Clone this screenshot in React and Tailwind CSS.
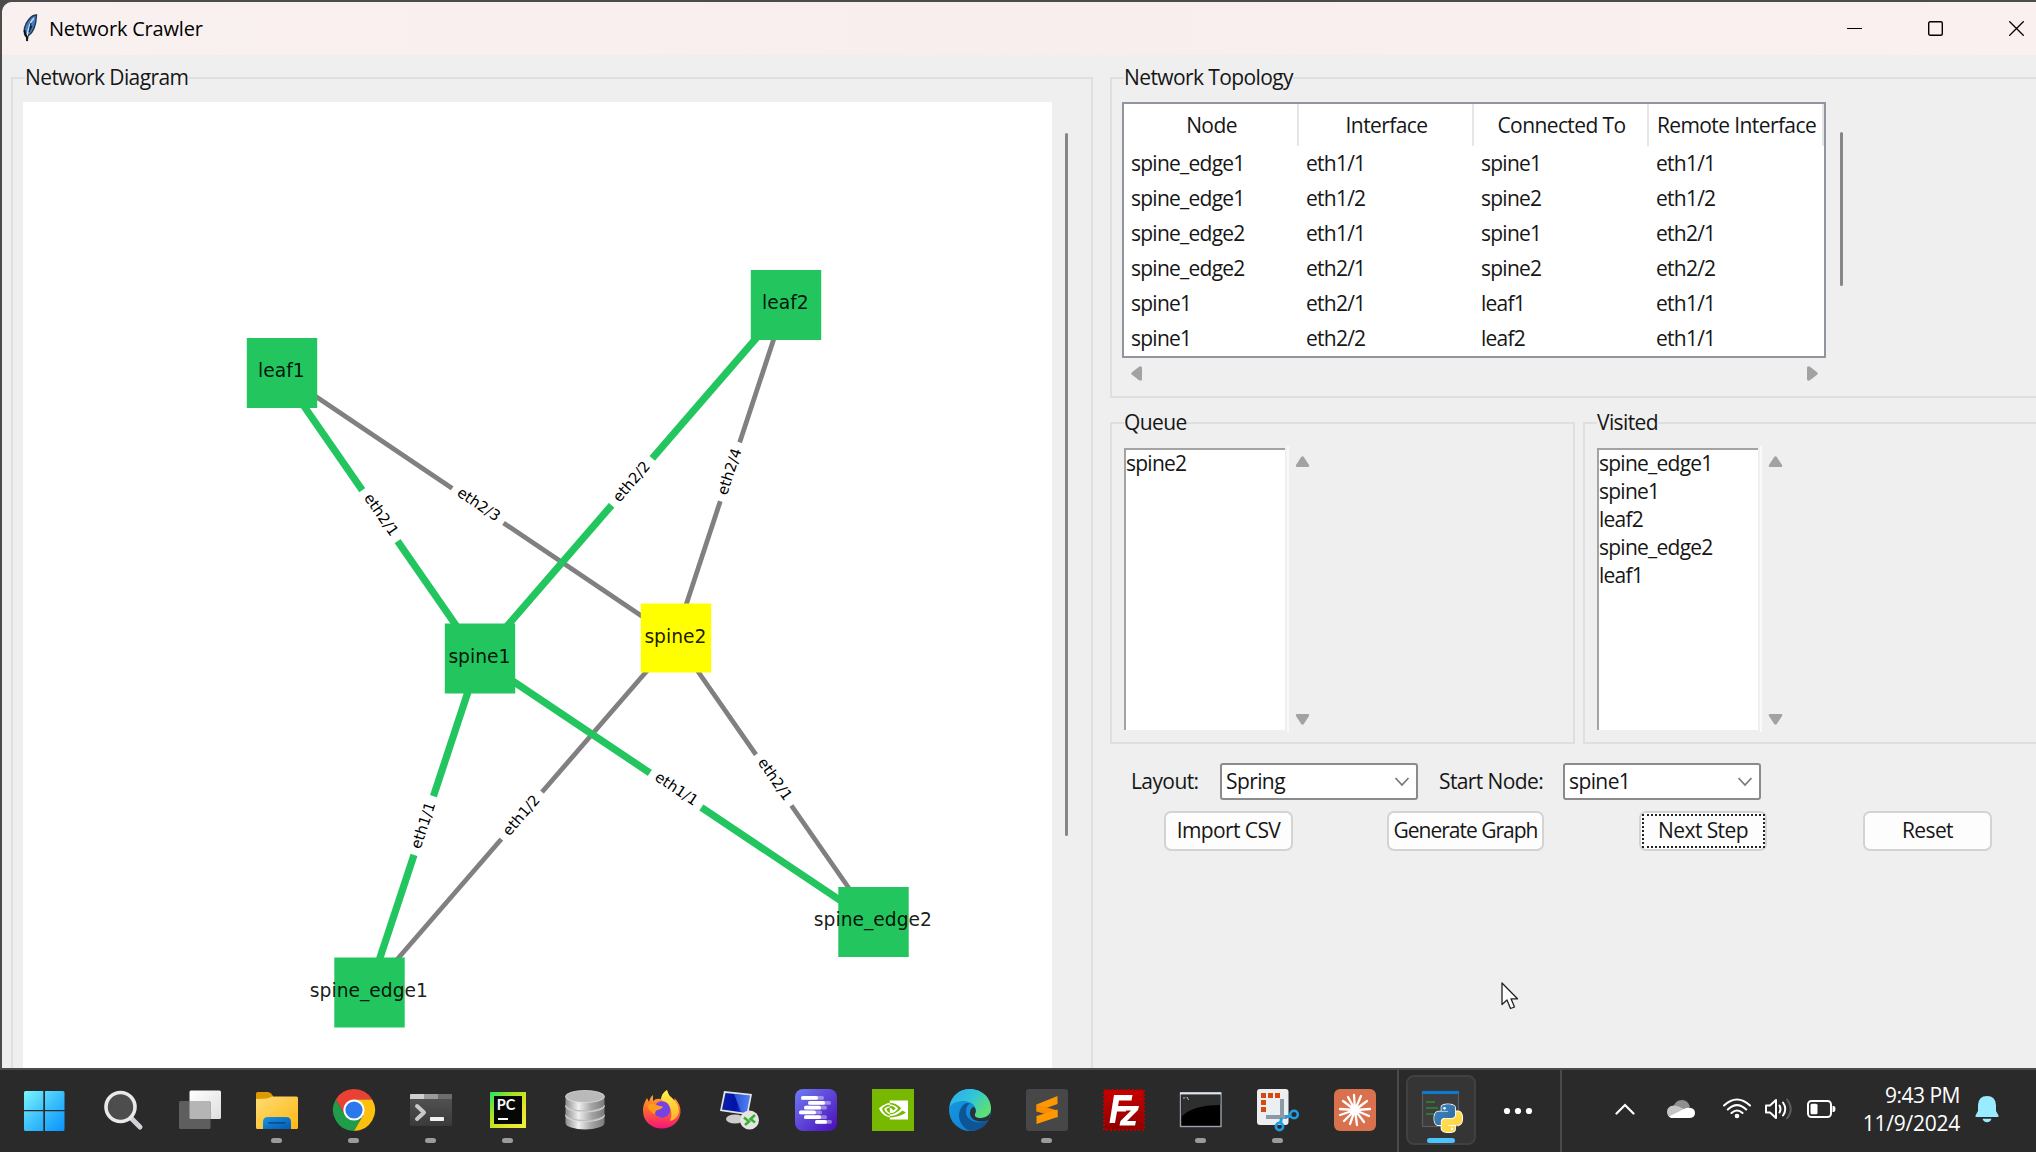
import React from "react";
import { SiNvidia } from "react-icons/si";

const GREEN = "#22c55e";

const NODES = {
  leaf1: { x: 282, y: 373 },
  leaf2: { x: 786, y: 305 },
  spine1: { x: 480, y: 658.5 },
  spine2: { x: 676, y: 638.5, fill: "#ffff00" },
  spine_edge1: { x: 369.5, y: 992.5 },
  spine_edge2: { x: 873.5, y: 922 },
};

const EDGES = [
  ["leaf1", "spine2", "eth2/3", false],
  ["leaf2", "spine2", "eth2/4", false],
  ["spine_edge1", "spine2", "eth1/2", false],
  ["spine2", "spine_edge2", "eth2/1", false],
  ["leaf1", "spine1", "eth2/1", true],
  ["spine1", "leaf2", "eth2/2", true],
  ["spine_edge1", "spine1", "eth1/1", true],
  ["spine1", "spine_edge2", "eth1/1", true],
];

const ROWS = [
  ["spine_edge1", "eth1/1", "spine1", "eth1/1"],
  ["spine_edge1", "eth1/2", "spine2", "eth1/2"],
  ["spine_edge2", "eth1/1", "spine1", "eth2/1"],
  ["spine_edge2", "eth2/1", "spine2", "eth2/2"],
  ["spine1", "eth2/1", "leaf1", "eth1/1"],
  ["spine1", "eth2/2", "leaf2", "eth1/1"],
];

function Diagram() {
  return (
    <svg width="1029" height="966" viewBox="23 102 1029 966" className="block bg-white tracking-normal">
      <g transform="translate(-1 0)">
        {EDGES.map(([a, b, , walked]) => (
          <line
            key={a + b}
            x1={NODES[a].x}
            y1={NODES[a].y}
            x2={NODES[b].x}
            y2={NODES[b].y}
            stroke={walked ? GREEN : "#808080"}
            strokeWidth={walked ? 7.2 : 4.8}
          />
        ))}
      </g>
      {Object.entries(NODES).map(([name, n]) => (
        <rect key={name} x={n.x - 35.2} y={n.y - 35} width="70.4" height={n.fill ? 69 : 70} fill={n.fill || GREEN} />
      ))}
      {EDGES.map(([a, b, label]) => {
        const p = NODES[a];
        const q = NODES[b];
        const angle = (Math.atan2(q.y - p.y, q.x - p.x) * 180) / Math.PI;
        const upright = angle > 90 ? angle - 180 : angle < -90 ? angle + 180 : angle;
        return (
          <g key={a + b} transform={`translate(${(p.x + q.x) / 2 - 1.2} ${(p.y + q.y) / 2}) rotate(${upright})`}>
            <rect x="-31" y="-13" width="62" height="26" fill="#fff" />
            <text
              x="0"
              y={upright > 0 ? 3.2 : 4.6}
              textAnchor="middle"
              fontSize="14.8"
              fontFamily="DejaVu Sans, sans-serif"
              fill="#000"
            >
              {label}
            </text>
          </g>
        );
      })}
      {Object.entries(NODES).map(([name, n]) => (
        <text
          key={name}
          x={n.x - 0.6}
          y={n.y + 4.4}
          textAnchor="middle"
          fontSize="18.7"
          fontFamily="DejaVu Sans, sans-serif"
          fill="#000"
          fillOpacity="0.9"
        >
          {name}
        </text>
      ))}
    </svg>
  );
}

function Group({ title, className, children }) {
  return (
    <fieldset className={`min-w-0 border-2 border-[#dfdfdf] ${className}`}>
      <legend className="h-[30px] whitespace-nowrap leading-[28px]">{title}</legend>
      {children}
    </fieldset>
  );
}

function Arrow({ dir }) {
  const d = {
    up: "M7.5 1.2Q8.2 1.2 8.8 2L14 10Q14.8 12 13.2 12H1.8Q.2 12 1 10L6.2 2Q6.8 1.2 7.5 1.2Z",
    down: "M7.5 11.8Q8.2 11.8 8.8 11L14 3Q14.8 1 13.2 1H1.8Q.2 1 1 3L6.2 11Q6.8 11.8 7.5 11.8Z",
    left: "M1.2 7.5Q1.2 6.8 2 6.2L9 .8Q12 -.6 12 2V13Q12 15.6 9 14.2L2 8.8Q1.2 8.2 1.2 7.5Z",
    right: "M11.8 7.5Q11.8 6.8 11 6.2L4 .8Q1 -.6 1 2V13Q1 15.6 4 14.2L11 8.8Q11.8 8.2 11.8 7.5Z",
  }[dir];
  const flat = dir === "up" || dir === "down";
  return (
    <svg width={flat ? 15 : 13} height={flat ? 13 : 15} className="block">
      <path d={d} fill="#a2a2a2" />
    </svg>
  );
}

function ListBox({ items }) {
  return (
    <div className="flex h-[286px]">
      <div className="mt-[2px] h-[282px] w-[161px] border-l-2 border-t-2 border-[#a3a3a3] bg-white tracking-[-0.75px]">
        {items.map((t) => (
          <div key={t} className="h-7 leading-[26px]">
            {t}
          </div>
        ))}
      </div>
      <div className="ml-[2px] h-full w-[2px] bg-[#fafafa]" />
      <div className="ml-[6px] flex flex-col justify-between pb-[6px] pt-[9px]">
        <Arrow dir="up" />
        <Arrow dir="down" />
      </div>
    </div>
  );
}

function Combo({ value }) {
  return (
    <div className="flex h-[37px] w-[198px] items-center justify-between rounded-[3px] border-2 border-[#8b8b8b] bg-white pl-[4px] pr-[6px]">
      <span>{value}</span>
      <svg width="16" height="12" className="block">
        <path d="M1.5 2L8 9L14.5 2" fill="none" stroke="#777" strokeWidth="1.7" />
      </svg>
    </div>
  );
}

function Button({ className, focused, children }) {
  return (
    <button
      className={`flex h-[40px] items-center justify-center whitespace-nowrap rounded-[7px] border-2 border-[#d3d3d3] bg-[#fdfdfd] ${className}`}
    >
      {focused ? (
        <span className="flex h-[34px] w-[123px] items-center justify-center border-2 border-dotted border-[#222]">
          {children}
        </span>
      ) : (
        children
      )}
    </button>
  );
}

function TitleBar() {
  return (
    <div className="flex h-[53px] shrink-0 items-center rounded-tl-[10px] bg-gradient-to-r from-[#f9f0f0] via-[#f8eeed] to-[#f9f0ef] pl-[20px] text-black">
      <svg width="16" height="28" viewBox="0 0 16 28" className="-mt-[2px]">
        <path d="M14.5 1C9 1 4 8 2.5 14C1.8 18 2.5 21 4.5 23L5 27L6 22C11 19 14 12 14.5 1Z" fill="#3f7fcb" stroke="#2b3440" strokeWidth="1.4" />
        <path d="M12 4C8 8 6 14 5 23" fill="none" stroke="#cfe3f7" strokeWidth="1.3" />
        <path d="M9 9L8 14L10 12L7 18" fill="none" stroke="#16243a" strokeWidth="1.2" />
        <path d="M2.5 16Q3 21 5 23L5.2 27" fill="none" stroke="#111" strokeWidth="1.8" />
      </svg>
      <span className="ml-[11px] text-[20px] tracking-[-0.2px]">Network Crawler</span>
      <div className="ml-auto flex items-center gap-[66px] pr-[12px]">
        <svg width="15" height="15" className="block">
          <path d="M0 7.5H15" stroke="#000" strokeWidth="1.2" />
        </svg>
        <svg width="15" height="15" className="block">
          <rect x=".7" y=".7" width="13.6" height="13.6" rx="1.5" fill="none" stroke="#000" strokeWidth="1.4" />
        </svg>
        <svg width="15" height="15" className="block">
          <path d="M.3 .3L14.7 14.7M14.7 .3L.3 14.7" stroke="#000" strokeWidth="1.3" />
        </svg>
      </div>
    </div>
  );
}

const ICONS = [
  {
    name: "start",
    art: (
      <g fill="url(#win)">
        <path d="M.5 2H18.3V21H-1V3.5Q-1 2 .5 2ZM20 2H38Q39.5 2 39.5 3.5V21H20ZM-1 22.2H18.3V42H.5Q-1 42 -1 40.5ZM20 22.2H39.5V40.5Q39.5 42 38 42H20Z" />
      </g>
    ),
  },
  {
    name: "search",
    art: (
      <g>
        <path d="M29 29L38 38" stroke="#cfd2d6" strokeWidth="5" strokeLinecap="round" />
        <circle cx="18.5" cy="18" r="14.5" fill="#4d4d4d" stroke="#e9e9ea" strokeWidth="3.6" />
      </g>
    ),
  },
  {
    name: "tasks",
    art: (
      <g>
        <rect x="10.5" y="1.5" width="31.5" height="28.5" rx="1.5" fill="url(#paper)" />
        <rect x="0" y="12" width="31.5" height="28" rx="1.5" fill="#5e5e5e" />
        <path d="M10.5 12H30Q31.5 12 31.5 13.5V30H12Q10.5 30 10.5 28.5Z" fill="#b5b5b5" />
      </g>
    ),
  },
  {
    name: "files",
    run: true,
    art: (
      <g>
        <path d="M0 4.5Q0 3 1.5 3H12Q13.5 3 15 4.5L17 7V12H0Z" fill="#dc9a00" />
        <path d="M0 10Q13 10 16 7.5H40.5Q42 7.5 42 9V38.5Q42 40 40.5 40H1.5Q0 40 0 38.5Z" fill="url(#folder)" />
        <path d="M7 40V33Q7 28 12 28H30Q35 28 35 33V40Z" fill="url(#fblue)" />
        <rect x="12.5" y="33" width="17" height="1.8" fill="#0a4f96" />
      </g>
    ),
  },
  {
    name: "chrome",
    run: true,
    art: (
      <g>
        <path d="M2.8 10.5A21 21 0 0 1 39.2 10.5H21L12 26.2Z" fill="#e94235" />
        <path d="M2.8 10.5A21 21 0 0 0 21 42L30.2 26.2L11.9 26.2Z" fill="#1f9d49" />
        <path d="M21 42A21 21 0 0 0 39.2 10.5H21L30.2 26.2Z" fill="#fdc00f" />
        <circle cx="21" cy="21" r="10.6" fill="#fff" />
        <circle cx="21" cy="21" r="8.6" fill="#2b78ea" />
      </g>
    ),
  },
  {
    name: "terminal",
    run: true,
    art: (
      <g>
        <rect y="5" width="42" height="32" rx="1" fill="url(#term)" />
        <path d="M0 10V6Q0 5 1 5H14V10Z" fill="#cfcfcf" />
        <path d="M14 5H28V10H14Z" fill="#9b9b9b" />
        <path d="M28 5H41Q42 5 42 6V10H28Z" fill="#6e6e6e" />
        <path d="M7 17L14 23.5L7 30" fill="none" stroke="#c9c9c9" strokeWidth="4" strokeLinecap="round" strokeLinejoin="round" />
        <rect x="20" y="28" width="14" height="4" rx=".8" fill="#f1f1f1" />
      </g>
    ),
  },
  {
    name: "pycharm",
    run: true,
    art: (
      <g>
        <rect x="3" y="3" width="36" height="36" fill="url(#pyc)" />
        <rect x="7" y="7" width="28" height="28" fill="#050805" />
        <text x="9.8" y="21" fontSize="14.5" fontWeight="700" fontFamily="Lato, sans-serif" fill="#fff">
          PC
        </text>
        <rect x="11" y="29" width="10" height="2" fill="#fff" />
      </g>
    ),
  },
  {
    name: "database",
    art: (
      <g>
        {[26, 16.5, 7].map((y) => (
          <g key={y}>
            <path d={`M1.5 ${y + 0.5}V${y + 8}A19.5 6.5 0 0 0 40.5 ${y + 8}V${y + 0.5}Z`} fill="url(#metal)" />
            <ellipse cx="21" cy={y + 0.5} rx="19.5" ry="6" fill="#b9b9b9" stroke="#dedede" strokeWidth=".8" />
          </g>
        ))}
      </g>
    ),
  },
  {
    name: "firefox",
    art: (
      <g>
        <path d="M2 22C2 15 5 11 6 9L8 13Q9 8 12 6L12 12Q15 9 20 10Q21 4 26 1Q27 6 31 9L33 12Q34 11 33.5 9Q40 15 39.5 24C38 34 30 39.5 21 39.5C10 39.5 2 32 2 22Z" fill="url(#fox)" />
        <path d="M20 10Q21 4 26 1Q27 6 31 9Q38 15 38 23Q36 31 29 32Q33 22 26 15Q22 13 20 10Z" fill="url(#foxy)" />
        <circle cx="21" cy="20.5" r="8.3" fill="#7542e5" />
        <path d="M6 16Q12 14 14 15Q17 17 22 17.5Q21 20 16 21Q14 22 14 25Q9 24 6 16Z" fill="#ff9a1f" />
      </g>
    ),
  },
  {
    name: "remote",
    art: (
      <g>
        <ellipse cx="17" cy="30" rx="9" ry="4.5" fill="#cdcdcd" />
        <path d="M6 2L34 5L30 26L2 22Z" fill="#e3e4e6" />
        <path d="M7.5 4L32 6.5L28.5 24L4 20.5Z" fill="url(#scr)" />
        <path d="M16 5L23 22.5L28.5 24L32 6.5Z" fill="#4b7cf0" opacity=".65" />
        <circle cx="31.5" cy="31" r="9.5" fill="#e4e4e4" />
        <path d="M26 28.5L31 32.5L27 36M37 26L32.5 30L37 33.5" fill="none" stroke="#35b22c" strokeWidth="2.5" />
      </g>
    ),
  },
  {
    name: "timeline",
    art: (
      <g>
        <rect width="42" height="42" rx="8" fill="url(#purple)" />
        {[
          [6, 7, 17, 6],
          [13, 12, 17, 6],
          [9, 16.8, 17, 6],
          [4, 21.5, 17, 6],
          [9, 26.3, 17, 6],
          [20, 31, 12, 5],
        ].map(([x, y, w, e]) => (
          <g key={y}>
            <rect x={x} y={y} width={w + e} height="3.8" rx="1.9" fill="#fff" opacity=".4" />
            <rect x={x} y={y} width={w} height="3.8" rx="1.9" fill="#fff" />
          </g>
        ))}
      </g>
    ),
  },
  {
    name: "nvidia",
    art: (
      <g>
        <rect width="42" height="42" fill="#76b900" />
        <SiNvidia x="7" y="6.5" width="29" height="29" size={29} color="#fff" />
      </g>
    ),
  },
  {
    name: "edge",
    art: (
      <g>
        <circle cx="21" cy="21" r="21" fill="url(#edgeBlue)" />
        <path d="M.5 18C2 7 10 0 21 0C33 0 42 9 42 19C42 26 37 29 31 29C27 29 25 27 26 25C29 20 25 13 16 12C8 12 3 14 .5 18Z" fill="url(#edgeTop)" />
        <path d="M16 14.5C8 20 7 35 20 41.5C29 43 37 37 39.5 31C32 36 17 33 17 23C17 19 18 16 21 14.5Q18 13.5 16 14.5Z" fill="#0f5596" />
        <path d="M26 25C25 28 28 29 31 29C36 29 39 27.5 41 24Q41 28 39.5 31C32 34.5 21 32 21 24Q21 19 25 18Q28 21 26 25Z" fill="#29313a" />
      </g>
    ),
  },
  {
    name: "sublime",
    run: true,
    art: (
      <g>
        <rect width="42" height="42" rx="3" fill="#474747" />
        <path d="M10.5 15.5L31.5 7V15L10.5 22.5Z" fill="#ff9800" />
        <path d="M10.5 15.5V22.5L31.5 28.5V21.5Z" fill="#f98d00" />
        <path d="M10.5 27L31.5 20.5V28L10.5 35Z" fill="#ff9800" />
      </g>
    ),
  },
  {
    name: "filezilla",
    art: (
      <g>
        <rect x="1" y="1" width="40" height="40" fill="url(#fz)" stroke="#b30000" strokeWidth="2" strokeDasharray="2 2" />
        <path d="M6.5 34L11 6H29.5L28.5 11.5H16L15 17H24L23 22.5H14L12 34Z" fill="#fff" />
        <path d="M21 17H36L35 21L24 32H33L32 36.5H16.5L17.5 32L28 21.5H20Z" fill="#fff" />
      </g>
    ),
  },
  {
    name: "console",
    run: true,
    art: (
      <g>
        <rect x=".5" y="4" width="40.5" height="33.5" fill="#000" stroke="#9aa3ad" strokeWidth="1.4" />
        <path d="M1.2 6H40.3V16Q12 16 1.2 28Z" fill="#2e2e2e" />
        <rect x="0" y="3.3" width="41" height="2.2" fill="#dfe6ee" />
        <path d="M3 9H5M6 8.5V9M7 8L8.5 11" stroke="#bbb" strokeWidth="1" />
      </g>
    ),
  },
  {
    name: "snip",
    run: true,
    art: (
      <g>
        <rect width="31.5" height="36" rx="3" fill="#eceff2" />
        <path d="M4 4H9V9H4ZM11 4H16V9H11ZM18 4H23V9H18ZM4 11H9V16H4ZM4 18H9V23H4Z" fill="#d9480f" />
        <path d="M25 10V28M9 28H30" stroke="#8d99a5" strokeWidth="4" />
        <circle cx="37" cy="25.5" r="3.8" fill="none" stroke="#1f9de0" strokeWidth="2.6" />
        <circle cx="22.5" cy="37.5" r="3.6" fill="none" stroke="#1f9de0" strokeWidth="2.6" />
        <path d="M28 28L34 27M24.5 29L23.500 34" stroke="#1f9de0" strokeWidth="3" />
      </g>
    ),
  },
  {
    name: "claude",
    art: (
      <g>
        <rect width="42" height="42" rx="6" fill="#d9714f" />
        <path
          d="M21 21L20 6M21 21L27 7M21 21L33 12M21 21L36 20M21 21L35 27M21 21L30 33M21 21L23 36M21 21L16 35M21 21L10 32M21 21L6 26M21 21L6 20M21 21L9 12M21 21L14 8"
          stroke="#fff"
          strokeWidth="2.3"
          strokeLinecap="round"
        />
      </g>
    ),
  },
];

function Gradients() {
  const lin = (id, stops, x2 = 1, y2 = 1) => (
    <linearGradient id={id} x1="0" y1="0" x2={x2} y2={y2}>
      {stops.map((c, i) => (
        <stop key={i} offset={i / (stops.length - 1)} stopColor={c} />
      ))}
    </linearGradient>
  );
  return (
    <svg width="0" height="0" className="absolute">
      <defs>
        {lin("win", ["#7af5ff", "#3cc0fb", "#0893ff"])}
        {lin("paper", ["#ffffff", "#dedede"])}
        {lin("folder", ["#ffdc72", "#fcb715"])}
        {lin("fblue", ["#1a94de", "#0558b5"])}
        {lin("term", ["#555555", "#3a3a3a"], 0, 1)}
        {lin("pyc", ["#21e366", "#a5e31e", "#e5e22a", "#f0f03c"])}
        {lin("metal", ["#8d8d8d", "#efefef", "#a5a5a5", "#7b7b7b"], 1, 0)}
        {lin("fox", ["#ffbd2e", "#ff6a2a", "#f7127f"], 0, 1)}
        {lin("foxy", ["#fff24a", "#ffb02a"], 0, 1)}
        {lin("scr", ["#0a1fa8", "#0012a8", "#5a86ff"], 1, 0)}
        {lin("purple", ["#6f7bf5", "#4b0db8"])}
        {lin("edgeBlue", ["#1b9de2", "#0877cf"])}
        {lin("edgeTop", ["#2fa8ec", "#30c4dc", "#5fe070"], 1, 0.6)}
        {lin("fz", ["#c80000", "#8d0000"], 0, 1)}
        {lin("pyb", ["#3f86c0", "#2f6a9e"])}
        {lin("pyy", ["#ffe05a", "#ffd43b"])}
      </defs>
    </svg>
  );
}

const PY_BLUE =
  "M14.25.18l.9.2.73.26.59.3.45.32.34.34.25.34.16.33.1.3.04.26.02.2-.01.13V8.5l-.05.63-.13.55-.21.46-.26.38-.3.31-.33.25-.35.19-.35.14-.33.1-.3.07-.26.04-.21.02H8.77l-.69.05-.59.14-.5.22-.41.27-.33.32-.27.35-.2.36-.15.37-.1.35-.07.32-.04.27-.02.21v3.06H3.17l-.21-.03-.28-.07-.32-.12-.35-.18-.36-.26-.36-.36-.35-.46-.32-.59-.28-.73-.21-.88-.14-1.05-.05-1.23.06-1.22.16-1.04.24-.87.32-.71.36-.57.4-.44.42-.33.42-.24.4-.16.36-.1.32-.05.24-.01h.16l.06.01h8.16v-.83H6.18l-.01-2.75-.02-.37.05-.34.11-.31.17-.28.25-.26.31-.23.38-.2.44-.18.51-.15.58-.12.64-.1.71-.06.77-.04.84-.02 1.27.05z";
const PY_YELLOW =
  "M21.04 6.11l.28.06.32.12.35.18.36.27.36.35.35.47.32.59.28.73.21.88.14 1.04.05 1.23-.06 1.23-.16 1.04-.24.86-.32.71-.36.57-.4.45-.42.33-.42.24-.4.16-.36.09-.32.05-.24.02-.16-.01h-8.22v.82h5.84l.01 2.76.02.36-.05.34-.11.31-.17.29-.25.25-.31.24-.38.2-.44.17-.51.15-.58.13-.64.09-.71.07-.77.04-.84.01-1.27-.04-1.07-.14-.9-.2-.73-.25-.59-.3-.45-.33-.34-.34-.25-.34-.16-.33-.1-.3-.04-.25-.02-.2.01-.13v-5.34l.05-.64.13-.54.21-.46.26-.38.3-.32.33-.24.35-.2.35-.14.33-.1.3-.06.26-.04.21-.02.13-.01h5.84l.69-.05.59-.14.5-.21.41-.28.33-.32.27-.35.2-.36.15-.36.1-.35.07-.32.04-.28.02-.21V6.07h2.09l.14.01z";

function Taskbar() {
  return (
    <div className="flex h-[84px] shrink-0 border-t-2 border-[#4b4b4b] bg-[#2a2a2a] pl-[7px] tracking-normal text-white">
      <Gradients />
      {ICONS.map((i) => (
        <div key={i.name} className="flex w-[77px] shrink-0 flex-col items-center pt-[19px]">
          <svg width="42" height="42" className="block overflow-visible">
            {i.art}
          </svg>
          {i.run && <div className="mt-[7px] h-[5px] w-[11px] rounded-full bg-[#9b9b9b]" />}
        </div>
      ))}
      <div className="ml-[4px] h-full w-[2px] shrink-0 bg-[#4b4b4b]" />
      <div className="ml-[7px] mt-[5px] flex h-[70px] w-[70px] shrink-0 flex-col items-center rounded-[8px] border-2 border-[#414141] bg-[#353535]">
        <svg width="42" height="42" className="mt-[12px] block overflow-visible">
          <rect x="2.5" y="2.5" width="36" height="35" fill="#3d3d3d" stroke="#5c5c5c" strokeWidth="1.2" />
          <rect x="2" y="2" width="37" height="3" fill="#0b7ad1" />
          <path d="M6 13H15M6 19H18M6 25H14" stroke="#2c8a2c" strokeWidth="1.5" />
          <g transform="translate(14.5 15.5) scale(1.15)">
            <path d={PY_BLUE} fill="url(#pyb)" stroke="#fff" strokeWidth="1.6" paintOrder="stroke" />
            <path d={PY_YELLOW} fill="url(#pyy)" stroke="#fff" strokeWidth="1.6" paintOrder="stroke" />
            <path d={PY_BLUE} fill="url(#pyb)" />
            <circle cx="8.7" cy="3.2" r="1.1" fill="#fff" />
            <circle cx="15.3" cy="21" r="1.1" fill="#fff" />
          </g>
        </svg>
        <div className="mt-[7px] h-[5px] w-[28px] rounded-full bg-[#4cc2ff]" />
      </div>
      <div className="flex w-[84px] shrink-0 items-center justify-center">
        <svg width="30" height="8" className="block" fill="#fff">
          <circle cx="4" cy="4" r="3.1" />
          <circle cx="15" cy="4" r="3.1" />
          <circle cx="26" cy="4" r="3.1" />
        </svg>
      </div>
      <div className="h-full w-[2px] shrink-0 bg-[#4b4b4b]" />
      <div className="flex grow items-center pb-[4px] pl-[53px]">
        <svg width="20" height="12" className="block">
          <path d="M1.5 10.5L10 2L18.5 10.5" fill="none" stroke="#fff" strokeWidth="2.2" strokeLinecap="round" />
        </svg>
        <svg width="28" height="20" className="ml-[32px] block">
          <path d="M6 9Q8 1 15 1Q21 1 23 8L14 14Z" fill="#8f8f8f" />
          <path d="M0 13Q0 7 7 6.5Q11 6.5 15 9L20 12L5 19Q0 18 0 13Z" fill="#c4c4c4" />
          <path d="M2 17.5L19 9Q28 8 28 14Q28 19 22 19H6Q3.5 19 2 17.5Z" fill="#fff" />
        </svg>
        <svg width="30" height="22" className="ml-[27px] block" fill="none" stroke="#fff" strokeWidth="2.1" strokeLinecap="round">
          <path d="M2 7.5Q15 -4.5 28 7.5M5.8 11.5Q15 2.8 24.2 11.5M9.5 15Q15 10 20.5 15" />
          <circle cx="15" cy="18" r="2.3" fill="#fff" stroke="none" />
        </svg>
        <svg width="30" height="24" className="ml-[12px] block" fill="none" stroke="#fff" strokeWidth="2" strokeLinecap="round" strokeLinejoin="round">
          <path d="M2 8.5H6L12 3V21L6 15.5H2Z" />
          <path d="M15.5 8.5Q17.5 12 15.5 15.5M19 5.5Q23.5 12 19 18.5" />
          <path d="M23 2.5Q30.5 12 23 21.5" stroke="#5b5b5b" />
        </svg>
        <svg width="30" height="20" className="ml-[12px] block">
          <rect x="2" y="2" width="23" height="16" rx="3.5" fill="none" stroke="#fff" strokeWidth="2" />
          <rect x="4.5" y="4.8" width="7" height="10.4" rx="1.5" fill="#fff" />
          <path d="M26.5 7H28Q29.5 7.5 29.5 10Q29.5 12.5 28 13H26.5Z" fill="#fff" />
        </svg>
        <div className="ml-auto flex flex-col items-end text-[21px] leading-[28px]">
          <span className="tracking-[-0.5px]">9:43 PM</span>
          <span className="tracking-[-0.25px]">11/9/2024</span>
        </div>
        <svg width="24" height="28" className="ml-[15px] mr-[37px] block" fill="#99ebff">
          <path d="M12 1Q20.5 1 21 10V16L23.5 20.5Q24 22 22.5 22H1.5Q0 22 .5 20.5L3 16V10Q3.5 1 12 1Z" />
          <path d="M7.5 23.8H16.5Q15.5 27.2 12 27.2Q8.5 27.2 7.5 23.8Z" />
        </svg>
      </div>
    </div>
  );
}

export default function App() {
  return (
    <div className="flex h-[1152px] w-[2036px] flex-col overflow-hidden bg-[#4c4c4c] font-['Open_Sans','Noto_Sans',sans-serif] text-[21px] tracking-[-0.6px] text-[#161616]">
      <div className="ml-[2px] mt-[2px] flex h-[1066px] shrink-0 flex-col overflow-hidden rounded-tl-[10px] bg-[#efefef]">
        <TitleBar />
        <div className="flex grow gap-[17px] pl-[9px] pt-[8px]">
          <Group title="Network Diagram" className="h-[1020px] w-[1082px] shrink-0 pl-[12px]">
            <div className="-ml-[2px] flex pt-[9px]">
              <div className="w-[1029px] shrink-0">
                <Diagram />
              </div>
              <div className="ml-[13px] mt-[31px] h-[703px] w-[3px] rounded-full bg-[#868686]" />
            </div>
          </Group>

          <div className="w-[940px] shrink-0">
            <Group title="Network Topology" className="h-[335px] pl-[12px]">
              <div className="-ml-[2px] flex pt-[9px]">
                <div className="h-[256px] w-[704px] border-2 border-[#91959e] bg-white">
                  <div className="grid h-[42px] grid-cols-4">
                    {["Node", "Interface", "Connected To", "Remote Interface"].map((h) => (
                      <div key={h} className="whitespace-nowrap border-r-2 border-[#e6e6e6] pl-[2px] text-center leading-[42px]">
                        {h}
                      </div>
                    ))}
                  </div>
                  {ROWS.map((r, i) => (
                    <div key={i} className="grid h-[35px] grid-cols-4 tracking-[-0.75px]">
                      {r.map((c, j) => (
                        <div key={j} className="pl-[7px] leading-[35px]">
                          {c}
                        </div>
                      ))}
                    </div>
                  ))}
                </div>
                <div className="ml-[14px] mt-[30px] h-[154px] w-[3px] rounded-full bg-[#868686]" />
              </div>
              <div className="flex w-[695px] justify-between pl-[6px] pt-[8px]">
                <Arrow dir="left" />
                <Arrow dir="right" />
              </div>
            </Group>

            <div className="mt-[10px] flex gap-[8px]">
              <Group title="Queue" className="h-[336px] w-[465px] shrink-0 pl-[12px]">
                <div className="pt-[8px]">
                  <ListBox items={["spine2"]} />
                </div>
              </Group>
              <Group title="Visited" className="h-[336px] w-[467px] shrink-0 pl-[12px]">
                <div className="pt-[8px]">
                  <ListBox items={["spine_edge1", "spine1", "leaf2", "spine_edge2", "leaf1"]} />
                </div>
              </Group>
            </div>

            <div className="mt-[19px] flex items-center pl-[21px]">
              <span className="w-[89px]">Layout:</span>
              <Combo value="Spring" />
              <span className="ml-[21px] w-[124px] whitespace-nowrap">Start Node:</span>
              <Combo value="spine1" />
            </div>
            <div className="mt-[11px] flex pl-[54px]">
              <Button className="w-[129px]">Import CSV</Button>
              <Button className="ml-[94px] w-[157px] tracking-[-1px]">Generate Graph</Button>
              <Button className="ml-[95px] w-[128px]" focused>
                Next Step
              </Button>
              <Button className="ml-[96px] w-[129px]">Reset</Button>
            </div>
          </div>
        </div>
      </div>
      <Taskbar />
      <svg width="20" height="30" className="absolute left-[1500px] top-[981px]">
        <path d="M2 2V23.5L7 19L10.5 27.5L14.5 26L11 17.8H17.5Z" fill="#fff" stroke="#222" strokeWidth="1.3" strokeLinejoin="round" />
      </svg>
    </div>
  );
}
